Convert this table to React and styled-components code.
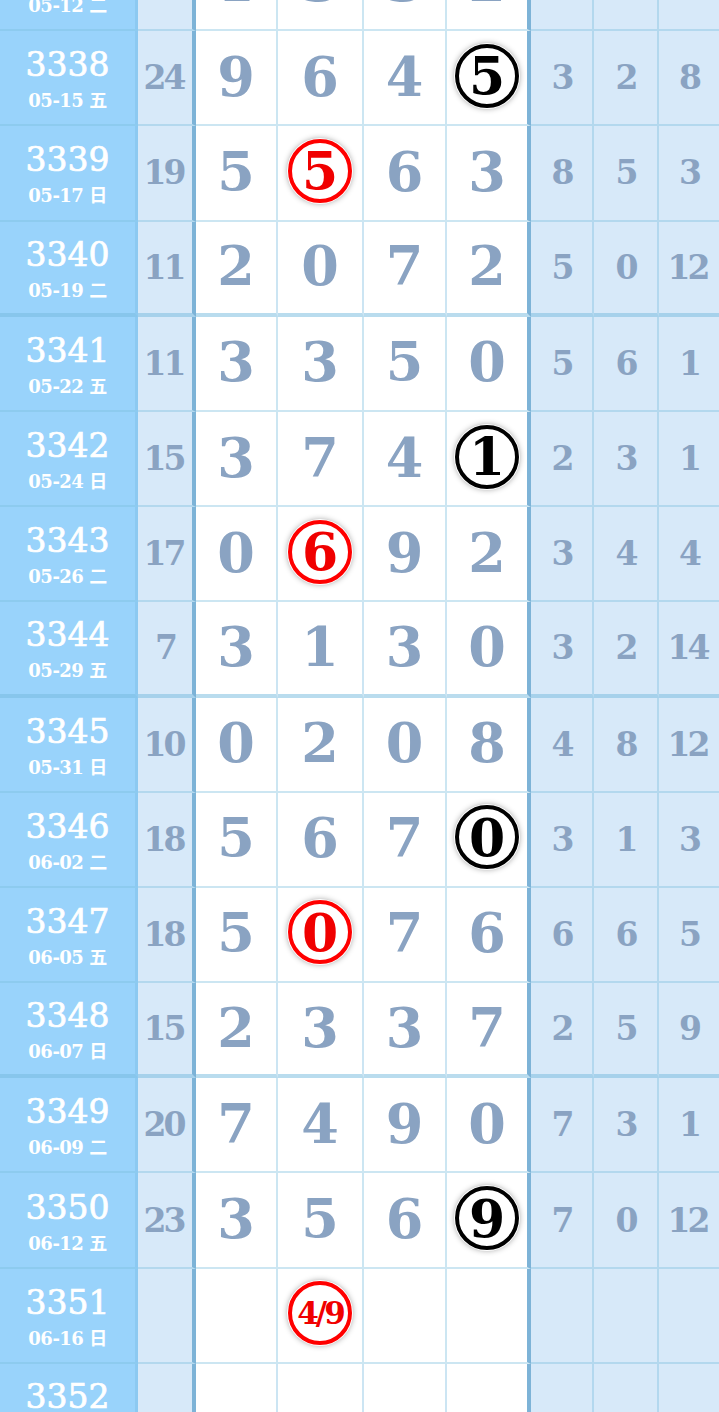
import React from 'react'
import styled, { createGlobalStyle, css } from 'styled-components'

const GlobalStyle = createGlobalStyle`
  html, body {
    margin: 0;
    padding: 0;
    background: #ffffff;
    overflow: hidden;
  }
  body {
    font-family: 'DejaVu Serif', 'Noto Sans CJK SC', serif;
  }
`

const THIN = 'rgba(120, 188, 222, 0.38)'
const GROUP = 'rgba(118, 186, 222, 0.5)'
const RULE = '#7db3d7'
const INK = '#8aa3c2'

const rows = [
  { no: 3337, date: '05-12 二', sum: 9, main: [1, 3, 3, 2], side: [4, 1, 6] },
  { no: 3338, date: '05-15 五', sum: 24, main: [9, 6, 4, 5], hit: 3, side: [3, 2, 8] },
  { no: 3339, date: '05-17 日', sum: 19, main: [5, 5, 6, 3], hit: 1, side: [8, 5, 3] },
  { no: 3340, date: '05-19 二', sum: 11, main: [2, 0, 7, 2], side: [5, 0, 12] },
  { no: 3341, date: '05-22 五', sum: 11, main: [3, 3, 5, 0], side: [5, 6, 1] },
  { no: 3342, date: '05-24 日', sum: 15, main: [3, 7, 4, 1], hit: 3, side: [2, 3, 1] },
  { no: 3343, date: '05-26 二', sum: 17, main: [0, 6, 9, 2], hit: 1, side: [3, 4, 4] },
  { no: 3344, date: '05-29 五', sum: 7, main: [3, 1, 3, 0], side: [3, 2, 14] },
  { no: 3345, date: '05-31 日', sum: 10, main: [0, 2, 0, 8], side: [4, 8, 12] },
  { no: 3346, date: '06-02 二', sum: 18, main: [5, 6, 7, 0], hit: 3, side: [3, 1, 3] },
  { no: 3347, date: '06-05 五', sum: 18, main: [5, 0, 7, 6], hit: 1, side: [6, 6, 5] },
  { no: 3348, date: '06-07 日', sum: 15, main: [2, 3, 3, 7], side: [2, 5, 9] },
  { no: 3349, date: '06-09 二', sum: 20, main: [7, 4, 9, 0], side: [7, 3, 1] },
  { no: 3350, date: '06-12 五', sum: 23, main: [3, 5, 6, 9], hit: 3, side: [7, 0, 12] },
  { no: 3351, date: '06-16 日', sum: '', main: ['', '4/9', '', ''], hit: 1, side: ['', '', ''] },
  { no: 3352, date: '06-19 二', sum: '', main: ['', '', '', ''], side: ['', '', ''] },
]

const Board = styled.div`
  width: 719px;
  margin-top: -64px;
`

const Row = styled.div`
  display: grid;
  grid-template-columns: 138px 58px 82px 86px 83px 84px 63px 65px 60px;
  height: 95.2px;
`

const Cell = styled.div`
  box-sizing: border-box;
  display: flex;
  align-items: center;
  justify-content: center;
  min-width: 0;
  border-bottom: ${p => (p.$groupEnd ? `4px solid ${GROUP}` : `2px solid ${THIN}`)};
  border-right: 2px solid ${THIN};
  ${p => p.$last && css`border-right: none;`}
  ${p => p.$rule && css`border-right: 4px solid ${RULE};`}
`

const PeriodCell = styled(Cell)`
  flex-direction: column;
  background: #99d3fb;
  border-right: 3px solid #8cc9f1;
  color: #ffffff;
`

const Period = styled.div`
  font-size: 33px;
  line-height: 36px;
  font-weight: 400;
  -webkit-text-stroke: 0.7px #ffffff;
  margin-top: 4px;
`

const DateText = styled.div`
  font-size: 18px;
  line-height: 22px;
  font-weight: 700;
  letter-spacing: -0.5px;
  margin-top: 7px;
`

const SideCell = styled(Cell)`
  background: #d7e9f9;
  color: ${INK};
  font-size: 33px;
  font-weight: 700;
  letter-spacing: -3px;
  padding-right: ${p => (p.$pair ? '3px' : '0')};
`

const MainCell = styled(Cell)`
  background: #ffffff;
  color: ${INK};
  font-size: 54px;
  font-weight: 700;
  padding-bottom: 2px;
`

const Ring = styled.span`
  box-sizing: border-box;
  width: 64px;
  height: 64px;
  margin-bottom: 2px;
  border-radius: 50%;
  display: flex;
  align-items: center;
  justify-content: center;
  background: #ffffff;
  border: 4px solid ${p => (p.$red ? '#ff0000' : '#000000')};
  color: ${p => (p.$red ? '#f00000' : '#000000')};
  box-shadow: 0 0 0 1px #ffffff, 0 0 6px rgba(0, 0, 0, 0.45);
  font-size: ${p => (p.$small ? '31px' : '52px')};
  letter-spacing: ${p => (p.$small ? '-3px' : '0')};
`

function DrawRow({ row, index }) {
  const groupEnd = index % 4 === 3
  return (
    <Row>
      <PeriodCell $groupEnd={groupEnd}>
        <Period>{row.no}</Period>
        <DateText>{row.date}</DateText>
      </PeriodCell>
      <SideCell $groupEnd={groupEnd} $rule $pair={String(row.sum).length > 1}>
        {row.sum}
      </SideCell>
      {row.main.map((d, i) => (
        <MainCell key={i} $groupEnd={groupEnd} $rule={i === 3}>
          {row.hit === i ? (
            <Ring $red={i === 1} $small={String(d).length > 1}>
              {d}
            </Ring>
          ) : (
            d
          )}
        </MainCell>
      ))}
      {row.side.map((d, i) => (
        <SideCell key={i} $groupEnd={groupEnd} $last={i === 2} $pair={String(d).length > 1}>
          {d}
        </SideCell>
      ))}
    </Row>
  )
}

export default function App() {
  return (
    <>
      <GlobalStyle />
      <Board>
        {rows.map((row, i) => (
          <DrawRow key={row.no} row={row} index={i} />
        ))}
      </Board>
    </>
  )
}
